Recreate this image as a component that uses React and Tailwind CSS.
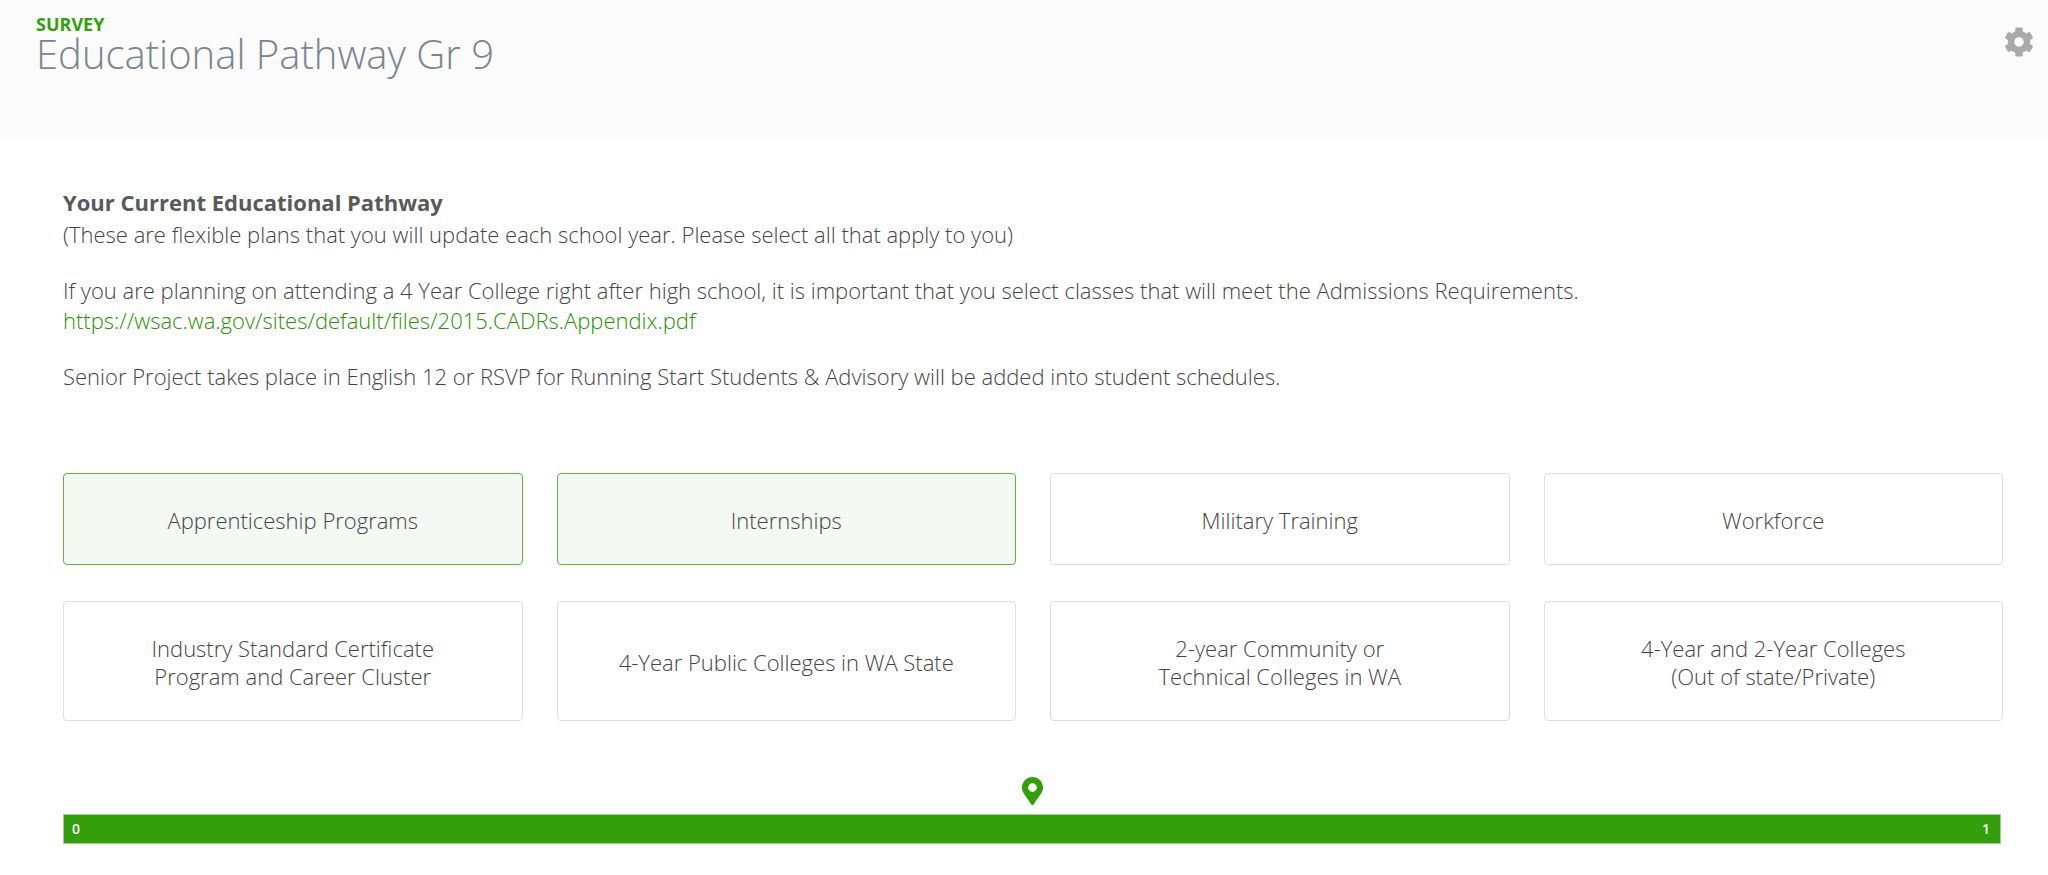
import { useState } from 'react';
import { FaCog, FaMapMarkerAlt } from 'react-icons/fa';

const OPTIONS = [
  ['Apprenticeship Programs'],
  ['Internships'],
  ['Military Training'],
  ['Workforce'],
  ['Industry Standard Certificate', 'Program and Career Cluster'],
  ['4-Year Public Colleges in WA State'],
  ['2-year Community or', 'Technical Colleges in WA'],
  ['4-Year and 2-Year Colleges', '(Out of state/Private)'],
];

function OptionButton({ lines, selected, onClick }) {
  return (
    <button
      type="button"
      aria-pressed={selected}
      onClick={onClick}
      className={`rounded border px-4 pt-8 pb-[30px] text-[22px] leading-7 font-light text-[#444547] ${
        selected ? 'border-[#5cb544] bg-[#f4f9f3]' : 'border-[#dedede] bg-white'
      }`}
    >
      {lines.map((line) => (
        <span key={line} className="block">{line}</span>
      ))}
    </button>
  );
}

export default function App() {
  const [selected, setSelected] = useState([0, 1]);

  const toggle = (i) =>
    setSelected((prev) => (prev.includes(i) ? prev.filter((n) => n !== i) : [...prev, i]));

  return (
    <div className="min-h-screen bg-white font-['Open_Sans',sans-serif] text-[#444547]">
      <header className="flex items-start justify-between bg-[#fbfbfb] pt-3 pr-3.5 pb-[65px] pl-9">
        <div>
          <p className="text-lg leading-6 font-bold text-[#339f0a]">SURVEY</p>
          <h1 className="text-[40px] leading-9 font-light text-[#7a858e]">Educational Pathway Gr 9</h1>
        </div>
        <button type="button" aria-label="Settings" className="mt-[15px] text-[#aaa]">
          <FaCog className="size-[30px]" />
        </button>
      </header>

      <main className="pt-12 pr-[45px] pb-8 pl-[63px]">
        <section className="text-[22px] leading-[30px] font-light">
          <h2 className="leading-[34px] font-bold text-[#58595b]">Your Current Educational Pathway</h2>
          <p>(These are flexible plans that you will update each school year. Please select all that apply to you)</p>
          <p className="mt-[26px]">
            If you are planning on attending a 4 Year College right after high school, it is important that you select
            classes that will meet the Admissions Requirements.
            <br />
            <a href="https://wsac.wa.gov/sites/default/files/2015.CADRs.Appendix.pdf" className="text-[#259400]">
              https://wsac.wa.gov/sites/default/files/2015.CADRs.Appendix.pdf
            </a>
          </p>
          <p className="mt-[26px]">
            Senior Project takes place in English 12 or RSVP for Running Start Students &amp; Advisory will be added
            into student schedules.
          </p>
        </section>

        <div className="mt-[82px] grid grid-cols-4 gap-x-[34px] gap-y-9">
          {OPTIONS.map((lines, i) => (
            <OptionButton key={lines[0]} lines={lines} selected={selected.includes(i)} onClick={() => toggle(i)} />
          ))}
        </div>

        {/* Progress */}
        <div className="mt-14 pr-0.5">
          <FaMapMarkerAlt className="mx-auto h-7 w-[21px] text-[#339f0a]" />
          <div className="mt-[9px] flex h-[30px] items-center justify-between border border-[#a3cf96] bg-[#339f0a] pr-2.5 pl-2 text-sm font-semibold text-white">
            <span>0</span>
            <span>1</span>
          </div>
        </div>
      </main>
    </div>
  );
}
